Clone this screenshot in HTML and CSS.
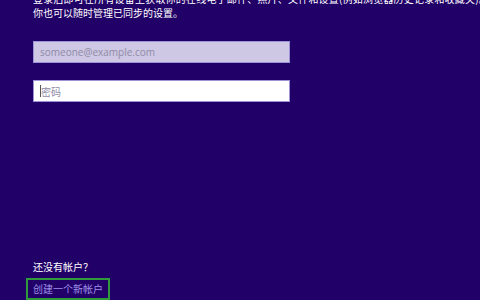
FILE: index.html
```html
<!DOCTYPE html>
<html lang="zh-CN">
<head>
<meta charset="utf-8">
<link rel="stylesheet" href="styles.css">
</head>
<body>
<div class="page">
  <div class="intro">
    <p class="line line-first">登录后即可在所有设备上获取你的在线电子邮件、照片、文件和设置(例如浏览器历史记录和收藏夹)。</p>
    <p class="line">你也可以随时管理已同步的设置。</p>
  </div>
  <div class="fields">
    <div class="field field-email"><span class="ph">someone@example.com</span></div>
    <div class="field field-pass"><span class="caret"></span><span class="ph">密码</span></div>
  </div>
  <div class="footer">
    <p class="question">还没有帐户？</p>
    <a class="create" href="#">创建一个新帐户</a>
  </div>
</div>
</body>
</html>
```
FILE: styles.css
```css
html, body {
  margin: 0;
  padding: 0;
  background: #210068;
}
.page {
  height: 300px;
  box-sizing: border-box;
  padding-left: 33px;
  display: flex;
  flex-direction: column;
  font-family: "Noto Sans CJK SC", "Noto Sans", sans-serif;
  color: #ffffff;
  overflow: hidden;
}
.intro {
  margin-top: -8px;
}
.line {
  margin: 0;
  font-size: 10px;
  line-height: 14px;
  white-space: nowrap;
}
.line-first {
  letter-spacing: 0.2px;
}
.fields {
  margin-top: 21px;
  display: flex;
  flex-direction: column;
  gap: 17px;
}
.field {
  width: 257px;
  height: 22px;
  box-sizing: border-box;
  border: 1px solid #9d92d6;
  display: flex;
  align-items: center;
  padding-left: 6px;
}
.field-email {
  background: #cec8e4;
}
.field-pass {
  background: #ffffff;
}
.ph {
  font-family: "Open Sans", "Noto Sans CJK SC", sans-serif;
  font-size: 10px;
  color: #8f8aa6;
}
.caret {
  width: 1px;
  height: 12px;
  background: #555;
}
.footer {
  margin-top: auto;
  display: flex;
  flex-direction: column;
  align-items: flex-start;
}
.question {
  margin: 0 0 4px 0;
  font-size: 10px;
  line-height: 14px;
}
.create {
  margin-left: -7px;
  padding: 2px 5px;
  border: 2px solid #2f9a3c;
  color: #9f92e8;
  font-size: 10px;
  line-height: 14px;
  text-decoration: none;
}
```
